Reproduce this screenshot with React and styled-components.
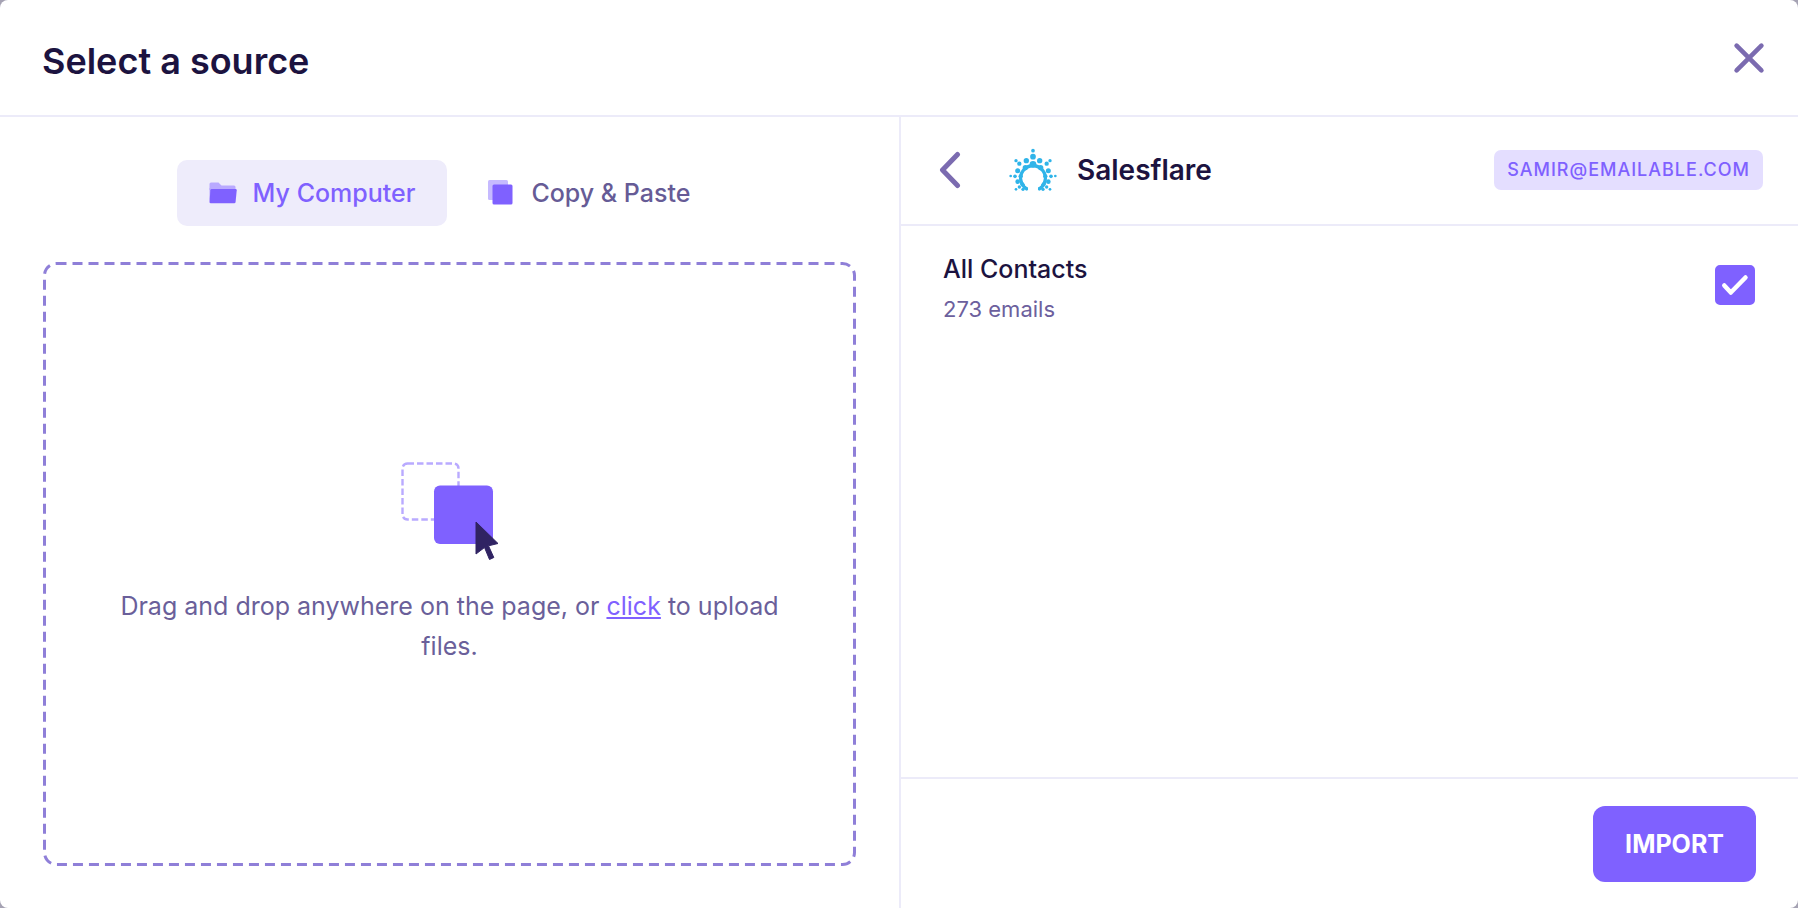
import React, { useState } from 'react';
import styled, { createGlobalStyle } from 'styled-components';

const App = () => {
    const [tab, setTab] = useState('computer');
    const [checked, setChecked] = useState(true);

    return (
        <>
            <GlobalStyle />
            <Modal>
                <Header>
                    <Title>Select a source</Title>
                    <IconButton aria-label='Close'>
                        <CloseIcon />
                    </IconButton>
                </Header>
                <Body>
                    <UploadPane>
                        <Tabs>
                            <Tab $active={tab === 'computer'} onClick={() => setTab('computer')}>
                                <FolderIcon />
                                My Computer
                            </Tab>
                            <Tab $active={tab === 'paste'} onClick={() => setTab('paste')}>
                                <CopyIcon />
                                Copy &amp; Paste
                            </Tab>
                        </Tabs>
                        <DropZone>
                            <DashedOutline aria-hidden='true'>
                                <rect x='1.5' y='1.5' rx='12' />
                            </DashedOutline>
                            <DragIcon />
                            <DropText>
                                Drag and drop anywhere on the page, or <a href='#upload'>click</a> to upload files.
                            </DropText>
                        </DropZone>
                    </UploadPane>
                    <SourcePane>
                        <SourceHeader>
                            <IconButton aria-label='Back'>
                                <BackIcon />
                            </IconButton>
                            <SalesflareLogo />
                            <SourceName>Salesflare</SourceName>
                            <Account>SAMIR@EMAILABLE.COM</Account>
                        </SourceHeader>
                        <List>
                            <ListRow htmlFor='all-contacts'>
                                <div>
                                    <ListName>All Contacts</ListName>
                                    <ListCount>273 emails</ListCount>
                                </div>
                                <CheckWrap>
                                    <Checkbox
                                        id='all-contacts'
                                        type='checkbox'
                                        checked={checked}
                                        onChange={(e) => setChecked(e.target.checked)}
                                    />
                                    <CheckIcon />
                                </CheckWrap>
                            </ListRow>
                        </List>
                        <Footer>
                            <ImportButton>IMPORT</ImportButton>
                        </Footer>
                    </SourcePane>
                </Body>
            </Modal>
        </>
    );
};

export default App;

const CloseIcon = () => (
    <svg width='32' height='32' viewBox='0 0 32 32' fill='none' stroke='#7b6bb0' strokeWidth='4.6' strokeLinecap='round'>
        <path d='M3.6 3.6 28.4 28.4M28.4 3.6 3.6 28.4' />
    </svg>
);

const BackIcon = () => (
    <svg width='22' height='38' viewBox='0 0 22 38' fill='none' stroke='#7b6bb0' strokeWidth='5' strokeLinecap='round' strokeLinejoin='round'>
        <path d='M18.5 3.5 3.5 19 18.5 34.5' />
    </svg>
);

const FolderIcon = () => (
    <svg width='28' height='24' viewBox='0 0 28 24'>
        <path fill='#b9a9ff' d='M.5 3a1.5 1.5 0 0 1 1.5-1.5h7.5l3 3H25A1.5 1.5 0 0 1 26.5 6v3H.5z' />
        <path fill='#b9a9ff' d='M.5 7h3L.5 20z' />
        <path fill='#7f61ff' d='M2.6 8h24q1.2 0 1.1 1.2L26.6 21q-.2 1.2-1.4 1.2H1.8Q.5 22.2.5 21L1.4 9.2Q1.5 8 2.6 8z' />
    </svg>
);

const CopyIcon = () => (
    <svg width='28' height='28' viewBox='0 0 28 28'>
        <rect x='1' y='1' width='20' height='20' rx='1.5' fill='#c6baff' />
        <rect x='5.5' y='5.5' width='20' height='20' rx='1.5' fill='#7f61ff' />
    </svg>
);

const DragIcon = () => (
    <svg width='100' height='101' viewBox='0 0 100 101'>
        <rect x='2.5' y='2.5' width='56' height='56' rx='5' fill='none' stroke='#b9aaff' strokeWidth='2.4' strokeDasharray='6.5 3' />
        <rect x='34' y='24.5' width='59' height='58.5' rx='6' fill='#7f61ff' />
        <path
            fill='#302363'
            stroke='#302363'
            strokeLinejoin='round'
            d='M76 61 98 82.5 88.5 84.8 93.8 96.5 89.5 98.5 84.5 86.5 76 93z'
        />
    </svg>
);

const CheckIcon = () => (
    <CheckMark viewBox='0 0 40 40'>
        <path d='M9.3 20.5 15.8 27.5 30.5 12.5' />
    </CheckMark>
);

// right half of the flare, the left one is mirrored from it
const flareDots = [
    [90, 36, 8], [121, 36, 5], [111, 45, 6.5], [116, 66, 7.5], [124, 83, 5.5],
    [137, 82, 4], [116, 99, 7], [111, 115, 5], [121, 122, 4], [100, 122, 5],
    [93, 57, 8], [107, 83, 6.5], [101, 107, 7], [89, 121, 4.5],
];

const SalesflareLogo = () => (
    <svg width='48' height='44' viewBox='-2 -2 144 132' fill='#2fb4e9'>
        <circle cx='70' cy='6' r='5.5' />
        <circle cx='70' cy='24' r='8.5' />
        <circle cx='70' cy='47' r='10' />
        {flareDots.map(([x, y, r]) => (
            <React.Fragment key={`${x}-${y}`}>
                <circle cx={x} cy={y} r={r} />
                <circle cx={140 - x} cy={y} r={r} />
            </React.Fragment>
        ))}
        <path fill='none' stroke='#2fb4e9' strokeWidth='10' d='M53 121A37 37 0 1 1 87 121' />
        <circle cx='70' cy='89' r='31' fill='#fff' />
        <path fill='#fff' d='M56 110h28v20H56z' />
    </svg>
);

const GlobalStyle = createGlobalStyle`
* {
    box-sizing: border-box;
}
body {
    margin: 0;
    background: #a5a2b3;
    font-family: Inter, "Liberation Sans", sans-serif;
}
h1, h2, p {
    margin: 0;
}
button {
    border: 0;
    padding: 0;
    background: none;
    font-family: inherit;
    cursor: pointer;
}
svg {
    display: block;
    flex-shrink: 0;
}
`

const Modal = styled.div`
display: flex;
flex-direction: column;
min-height: 100vh;
border-radius: 8px;
background: #fff;
color: #1c1340;
overflow: hidden;
`

const Header = styled.header`
display: flex;
align-items: center;
justify-content: space-between;
padding: 33px 33px 32px 42px;
border-bottom: 2px solid #ecebf9;
`

const Title = styled.h1`
padding-top: 6px;
font-size: 36px;
line-height: 44px;
font-weight: 600;
`

const IconButton = styled.button`
display: flex;
`

const Body = styled.main`
display: grid;
grid-template-columns: 1fr 1fr;
flex: 1;
`

const UploadPane = styled.section`
display: flex;
flex-direction: column;
gap: 36px;
padding: 43px 43px 42px;
`

const Tabs = styled.div`
display: flex;
justify-content: center;
gap: 8px;
`

const Tab = styled.button`
display: flex;
align-items: center;
gap: 16px;
height: 66px;
padding: 0 32px;
border-radius: 10px;
background: ${({ $active }) => ($active ? '#eeecfb' : 'transparent')};
color: ${({ $active }) => ($active ? '#7f61ff' : '#665b96')};
font-size: 25px;
font-weight: 500;
`

const DropZone = styled.div`
position: relative;
display: flex;
flex: 1;
flex-direction: column;
align-items: center;
justify-content: center;
gap: 24px;
padding: 48px 64px 50px;
`

const DashedOutline = styled.svg`
position: absolute;
inset: 0;
width: 100%;
height: 100%;
pointer-events: none;
rect {
    width: calc(100% - 3px);
    height: calc(100% - 3px);
    fill: none;
    stroke: #8f7fd8;
    stroke-width: 3px;
    stroke-dasharray: 10 6;
}
`

const DropText = styled.p`
color: #6a5f9a;
font-size: 25px;
line-height: 40px;
text-align: center;
a {
    color: #7f61ff;
    text-decoration-thickness: 2px;
    text-underline-offset: 2px;
}
`

const SourcePane = styled.section`
display: flex;
flex-direction: column;
border-left: 2px solid #ecebf9;
`

const SourceHeader = styled.div`
display: flex;
align-items: center;
height: 109px;
padding: 0 35px 2px 38px;
border-bottom: 2px solid #ecebf9;
svg {
    margin-right: 20px;
}
${IconButton} svg {
    margin-right: 48px;
}
`

const SourceName = styled.h2`
flex: 1;
font-size: 28px;
line-height: 32px;
font-weight: 600;
`

const Account = styled.span`
padding: 0 13px;
border-radius: 7px;
background: #e4deff;
color: #7f61ff;
font-size: 18px;
line-height: 40px;
font-weight: 500;
letter-spacing: 1px;
`

const List = styled.div`
flex: 1;
padding: 23px 43px 23px 42px;
`

const ListRow = styled.label`
display: flex;
align-items: flex-start;
justify-content: space-between;
`

const ListName = styled.p`
font-size: 25px;
line-height: 40px;
font-weight: 500;
`

const ListCount = styled.p`
color: #6c609d;
font-size: 22px;
line-height: 40px;
`

const CheckWrap = styled.span`
display: grid;
padding-top: 16px;
> * {
    grid-area: 1 / 1;
}
`

const Checkbox = styled.input`
appearance: none;
width: 40px;
height: 40px;
margin: 0;
border: 2px solid #7f61ff;
border-radius: 5px;
background: #fff;
&:checked {
    background: #7f61ff;
}
`

const CheckMark = styled.svg`
width: 40px;
height: 40px;
fill: none;
stroke: #fff;
stroke-width: 4.5px;
stroke-linecap: round;
stroke-linejoin: round;
pointer-events: none;
`

const Footer = styled.footer`
display: flex;
justify-content: flex-end;
padding: 27px 42px 26px;
border-top: 2px solid #ecebf9;
`

const ImportButton = styled.button`
padding: 0 32px;
border-radius: 12px;
background: #7f61ff;
color: #fff;
font-size: 25px;
line-height: 76px;
font-weight: 700;
`
